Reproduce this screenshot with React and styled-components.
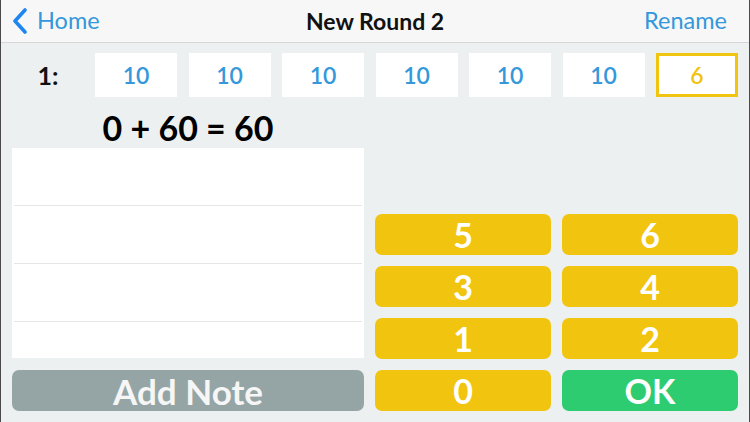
import styled, { createGlobalStyle } from 'styled-components';

const SCORES = [10, 10, 10, 10, 10, 10, 6];
const KEYS = ['5', '6', '3', '4', '1', '2', '0', 'OK'];
const NOTE_ROWS = 4;

const GlobalStyle = createGlobalStyle`
  html, body {
    margin: 0;
    padding: 0;
    background: #ecf0f1;
  }
  * { box-sizing: border-box; }
`;

function App() {
  return (
    <>
      <GlobalStyle />
      <Page>
        <Header>
          <BackButton>
            <svg width="18" height="26" viewBox="0 0 18 26">
              <polyline points="14,2 4,13 14,24" fill="none" stroke="#1f86f0" strokeWidth="3.6" strokeLinecap="round" strokeLinejoin="round" />
            </svg>
            <NavText>Home</NavText>
          </BackButton>
          <Title>New Round 2</Title>
          <NavText>Rename</NavText>
        </Header>

        <ScoreRow>
          <RoundLabel>1:</RoundLabel>
          <Scores>
            {SCORES.map((s, i) => (
              <ScoreBox key={i} $active={i === SCORES.length - 1}>{s}</ScoreBox>
            ))}
          </Scores>
        </ScoreRow>

        <Main>
          <LeftColumn>
            <Equation>0 + 60 = 60</Equation>
            <NoteList>
              {Array.from({ length: NOTE_ROWS }).map((_, i) => <NoteRow key={i} />)}
            </NoteList>
            <AddNote>Add Note</AddNote>
          </LeftColumn>
          <RightColumn>
            <Keypad>
              {KEYS.map(k => <Key key={k} $ok={k === 'OK'}>{k}</Key>)}
            </Keypad>
          </RightColumn>
        </Main>
      </Page>
    </>
  );
}

const Page = styled.div`
  width: 750px;
  height: 422px;
  display: flex;
  flex-direction: column;
  background: #ecf0f1;
  border-left: 1px solid #4a4a4a;
  border-right: 1px solid #4a4a4a;
  font-family: Lato, "Open Sans", sans-serif;
  overflow: hidden;
`;

const Header = styled.div`
  height: 43px;
  flex: 0 0 43px;
  display: flex;
  align-items: center;
  justify-content: space-between;
  padding: 0 22px 0 10px;
  background: #f7f7f7;
  border-bottom: 1px solid #d4d6d8;
  position: relative;
`;

const BackButton = styled.div`
  display: flex;
  align-items: center;
  gap: 8px;
`;

const NavText = styled.span`
  font-size: 23.5px;
  color: #3498db;
  line-height: 1;
`;

const Title = styled.span`
  position: absolute;
  left: 0;
  right: 0;
  text-align: center;
  font-size: 23px;
  font-weight: 700;
  color: #111;
  pointer-events: none;
`;

const ScoreRow = styled.div`
  display: flex;
  align-items: center;
  padding-top: 10px;
  height: 54px;
  flex: 0 0 54px;
`;

const RoundLabel = styled.div`
  width: 94px;
  text-align: center;
  font-size: 25px;
  font-weight: 700;
  color: #111;
`;

const Scores = styled.div`
  display: flex;
  gap: 11.5px;
`;

const ScoreBox = styled.div`
  width: 82px;
  height: 44px;
  display: flex;
  align-items: center;
  justify-content: center;
  background: #fff;
  font-size: 23px;
  font-weight: 600;
  color: ${p => (p.$active ? '#f1c40f' : '#3498db')};
  border: ${p => (p.$active ? '3px solid #f1c40f' : 'none')};
`;

const Main = styled.div`
  flex: 1;
  display: grid;
  grid-template-columns: 352px 363px;
  column-gap: 11px;
  padding: 0 0 11px 11px;
`;

const LeftColumn = styled.div`
  display: flex;
  flex-direction: column;
`;

const Equation = styled.div`
  height: 51px;
  display: flex;
  align-items: center;
  justify-content: center;
  padding-top: 9px;
  font-size: 34px;
  font-weight: 700;
  color: #000;
`;

const NoteList = styled.div`
  height: 210px;
  background: #fff;
  overflow: hidden;
  padding: 0 2px;
`;

const NoteRow = styled.div`
  height: 58px;
  border-bottom: 1px solid #e6e6e6;
`;

const AddNote = styled.div`
  margin-top: 12px;
  height: 41px;
  border-radius: 7px;
  background: #95a5a6;
  color: #f6f6f6;
  font-size: 35px;
  font-weight: 700;
  display: flex;
  align-items: center;
  justify-content: center;
`;

const RightColumn = styled.div`
  display: flex;
  flex-direction: column;
  justify-content: flex-end;
`;

const Keypad = styled.div`
  display: grid;
  grid-template-columns: 176px 176px;
  grid-auto-rows: 41px;
  gap: 11px;
`;

const Key = styled.div`
  border-radius: 7px;
  background: ${p => (p.$ok ? '#2ecc71' : '#f1c40f')};
  color: #fff;
  font-size: 34px;
  font-weight: 700;
  display: flex;
  align-items: center;
  justify-content: center;
`;

export default App;
